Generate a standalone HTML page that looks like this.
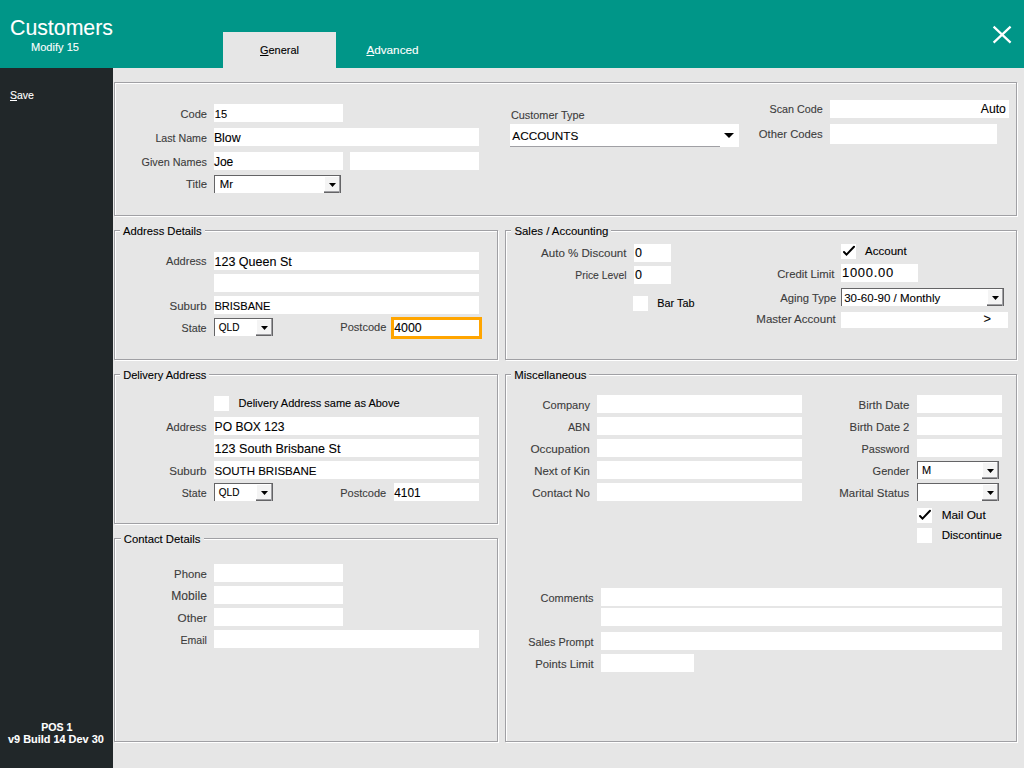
<!DOCTYPE html><html><head><meta charset="utf-8"><title>Customers</title><style>
html,body{margin:0;padding:0}
body{width:1024px;height:768px;overflow:hidden;position:relative;background:#e6e6e6;font-family:"Liberation Sans",sans-serif}
.t{position:absolute;white-space:nowrap;line-height:20px;-webkit-text-stroke:0.1px currentColor}
.r{position:absolute}
</style></head><body>
<div class="r" style="left:0px;top:0px;width:1024px;height:68px;background:#009688;"></div>
<div class="t" style="left:10.00px;top:18px;font-size:21.30px;color:#fff">Customers</div>
<div class="t" style="left:31.00px;top:37px;font-size:11.07px;color:#fff">Modify 15</div>
<div class="r" style="left:223px;top:32px;width:113px;height:36px;background:#e6e6e6;"></div>
<div class="t" style="left:260.00px;top:40px;font-size:10.96px;color:#000"><span style="text-decoration:underline;text-underline-offset:1px">G</span>eneral</div>
<div class="t" style="left:366.40px;top:40px;font-size:11.73px;color:#fff"><span style="text-decoration:underline;text-underline-offset:1px">A</span>dvanced</div>
<svg class="r" style="left:990px;top:23px" width="24" height="24"><path d="M3.6 3.6 L20.6 19.6 M20.6 3.6 L3.6 19.6" stroke="#fff" stroke-width="2.2"/></svg>
<div class="r" style="left:0px;top:68px;width:113px;height:700px;background:#212729;"></div>
<div class="t" style="left:10.00px;top:85px;font-size:10.53px;color:#fff"><span style="text-decoration:underline;text-underline-offset:1px">S</span>ave</div>
<div class="t" style="left:41.25px;top:717px;font-size:10.61px;color:#fff;font-weight:bold">POS 1</div>
<div class="t" style="left:8.00px;top:729px;font-size:10.91px;color:#fff;font-weight:bold">v9 Build 14 Dev 30</div>
<div class="r" style="left:115px;top:83px;width:903px;height:134px;border:1px solid #fff;box-sizing:border-box"></div>
<div class="r" style="left:114px;top:82px;width:903px;height:134px;border:1px solid #a0a0a4;box-sizing:border-box"></div>
<div class="r" style="left:115px;top:231px;width:384px;height:130px;border:1px solid #fff;box-sizing:border-box"></div>
<div class="r" style="left:114px;top:230px;width:384px;height:130px;border:1px solid #a0a0a4;box-sizing:border-box"></div>
<div class="r" style="left:120px;top:229px;width:85px;height:3px;background:#e6e6e6;"></div>
<div class="t" style="left:123.10px;top:221px;font-size:11.22px;color:#000">Address Details</div>
<div class="r" style="left:506px;top:231px;width:512px;height:130px;border:1px solid #fff;box-sizing:border-box"></div>
<div class="r" style="left:505px;top:230px;width:512px;height:130px;border:1px solid #a0a0a4;box-sizing:border-box"></div>
<div class="r" style="left:511px;top:229px;width:100px;height:3px;background:#e6e6e6;"></div>
<div class="t" style="left:514.40px;top:221px;font-size:11.43px;color:#000">Sales / Accounting</div>
<div class="r" style="left:115px;top:375px;width:384px;height:150px;border:1px solid #fff;box-sizing:border-box"></div>
<div class="r" style="left:114px;top:374px;width:384px;height:150px;border:1px solid #a0a0a4;box-sizing:border-box"></div>
<div class="r" style="left:120px;top:373px;width:89px;height:3px;background:#e6e6e6;"></div>
<div class="t" style="left:123.20px;top:365px;font-size:11.09px;color:#000">Delivery Address</div>
<div class="r" style="left:506px;top:375px;width:512px;height:368px;border:1px solid #fff;box-sizing:border-box"></div>
<div class="r" style="left:505px;top:374px;width:512px;height:368px;border:1px solid #a0a0a4;box-sizing:border-box"></div>
<div class="r" style="left:511px;top:373px;width:78px;height:3px;background:#e6e6e6;"></div>
<div class="t" style="left:514.30px;top:365px;font-size:11.40px;color:#000">Miscellaneous</div>
<div class="r" style="left:115px;top:539px;width:384px;height:204px;border:1px solid #fff;box-sizing:border-box"></div>
<div class="r" style="left:114px;top:538px;width:384px;height:204px;border:1px solid #a0a0a4;box-sizing:border-box"></div>
<div class="r" style="left:121px;top:537px;width:83px;height:3px;background:#e6e6e6;"></div>
<div class="t" style="left:123.80px;top:529px;font-size:11.31px;color:#000">Contact Details</div>
<div class="t" style="left:180.50px;top:104px;font-size:11.09px;color:#3c3c3c">Code</div>
<div class="t" style="left:155.40px;top:128px;font-size:10.67px;color:#3c3c3c">Last Name</div>
<div class="t" style="left:141.50px;top:152px;font-size:10.81px;color:#3c3c3c">Given Names</div>
<div class="t" style="left:186.00px;top:174px;font-size:11.35px;color:#3c3c3c">Title</div>
<div class="r" style="left:214px;top:104px;width:129px;height:18px;background:#fff;"></div>
<div class="t" style="left:214.80px;top:104px;font-size:11.08px;color:#000">15</div>
<div class="r" style="left:214px;top:128px;width:265px;height:18px;background:#fff;"></div>
<div class="t" style="left:213.90px;top:128px;font-size:12.35px;color:#000">Blow</div>
<div class="r" style="left:214px;top:152px;width:129px;height:18px;background:#fff;"></div>
<div class="t" style="left:213.90px;top:152px;font-size:12.05px;color:#000">Joe</div>
<div class="r" style="left:350px;top:152px;width:129px;height:18px;background:#fff;"></div>
<div class="r" style="left:214px;top:175px;width:127px;height:18px;background:#fff;"></div>
<div class="r" style="left:214px;top:175px;width:127px;height:1px;background:#646466;"></div>
<div class="r" style="left:214px;top:175px;width:1px;height:18px;background:#646466;"></div>
<div class="r" style="left:340px;top:175px;width:1px;height:18px;background:#646466;"></div>
<div class="r" style="left:324px;top:176px;width:16px;height:16px;background:#f4f4f4;"></div>
<div class="r" style="left:324px;top:176px;width:16px;height:1px;background:#fff;"></div>
<div class="r" style="left:324px;top:176px;width:1px;height:16px;background:#fff;"></div>
<div class="r" style="left:324px;top:192px;width:17px;height:1px;background:#646466;"></div>
<div class="r" style="left:339px;top:176px;width:1px;height:17px;background:#a0a0a4;"></div>
<div class="r" style="left:324px;top:191px;width:16px;height:1px;background:#a0a0a4;"></div>
<svg class="r" style="left:328.5px;top:183px" width="7" height="4"><polygon points="0,0 7,0 3.5,4" fill="#000"/></svg>
<div class="t" style="left:219.80px;top:174px;font-size:11.33px;color:#000">Mr</div>
<div class="t" style="left:510.90px;top:105px;font-size:10.90px;color:#3c3c3c">Customer Type</div>
<div class="r" style="left:510px;top:124px;width:229px;height:23px;background:#fff;"></div>
<div class="r" style="left:510px;top:146px;width:210px;height:1px;background:#a0a0a4;"></div>
<div class="t" style="left:512.30px;top:126px;font-size:11.78px;color:#000">ACCOUNTS</div>
<svg class="r" style="left:724px;top:133px" width="10" height="5"><polygon points="0,0 10,0 5,5" fill="#000"/></svg>
<div class="t" style="left:769.50px;top:99px;font-size:10.77px;color:#3c3c3c">Scan Code</div>
<div class="t" style="left:758.80px;top:124px;font-size:11.29px;color:#3c3c3c">Other Codes</div>
<div class="r" style="left:830px;top:100px;width:179px;height:18px;background:#fff;"></div>
<div class="t" style="left:980.80px;top:99px;font-size:12.17px;color:#000">Auto</div>
<div class="r" style="left:830px;top:124px;width:167px;height:20px;background:#fff;"></div>
<div class="t" style="left:166.10px;top:251px;font-size:11.04px;color:#3c3c3c">Address</div>
<div class="r" style="left:214px;top:252px;width:265px;height:18px;background:#fff;"></div>
<div class="t" style="left:214.50px;top:252px;font-size:12.53px;color:#000">123 Queen St</div>
<div class="r" style="left:214px;top:274px;width:265px;height:18px;background:#fff;"></div>
<div class="t" style="left:169.50px;top:296px;font-size:11.50px;color:#3c3c3c">Suburb</div>
<div class="r" style="left:214px;top:296px;width:265px;height:18px;background:#fff;"></div>
<div class="t" style="left:214.40px;top:296px;font-size:11.08px;color:#000">BRISBANE</div>
<div class="t" style="left:181.50px;top:318px;font-size:10.75px;color:#3c3c3c">State</div>
<div class="r" style="left:214px;top:318px;width:59px;height:18px;background:#fff;"></div>
<div class="r" style="left:214px;top:318px;width:59px;height:1px;background:#646466;"></div>
<div class="r" style="left:214px;top:318px;width:1px;height:18px;background:#646466;"></div>
<div class="r" style="left:272px;top:318px;width:1px;height:18px;background:#646466;"></div>
<div class="r" style="left:256px;top:319px;width:16px;height:16px;background:#f4f4f4;"></div>
<div class="r" style="left:256px;top:319px;width:16px;height:1px;background:#fff;"></div>
<div class="r" style="left:256px;top:319px;width:1px;height:16px;background:#fff;"></div>
<div class="r" style="left:256px;top:335px;width:17px;height:1px;background:#646466;"></div>
<div class="r" style="left:271px;top:319px;width:1px;height:17px;background:#a0a0a4;"></div>
<div class="r" style="left:256px;top:334px;width:16px;height:1px;background:#a0a0a4;"></div>
<svg class="r" style="left:260.5px;top:326px" width="7" height="4"><polygon points="0,0 7,0 3.5,4" fill="#000"/></svg>
<div class="t" style="left:218.80px;top:318px;font-size:10.02px;color:#000">QLD</div>
<div class="t" style="left:340.30px;top:317px;font-size:11.06px;color:#3c3c3c">Postcode</div>
<div class="r" style="left:391px;top:317px;width:91px;height:22px;background:#fff;border:3px solid #ffa500;box-sizing:border-box"></div>
<div class="t" style="left:394.20px;top:318px;font-size:12.36px;color:#000">4000</div>
<div class="t" style="left:541.10px;top:243px;font-size:11.55px;color:#3c3c3c">Auto % Discount</div>
<div class="r" style="left:634px;top:244px;width:37px;height:18px;background:#fff;"></div>
<div class="t" style="left:635.00px;top:243px;font-size:12.50px;color:#000">0</div>
<div class="t" style="left:575.30px;top:266px;font-size:10.35px;color:#3c3c3c">Price Level</div>
<div class="r" style="left:634px;top:266px;width:37px;height:18px;background:#fff;"></div>
<div class="t" style="left:635.00px;top:265px;font-size:12.50px;color:#000">0</div>
<div class="r" style="left:633px;top:296px;width:15px;height:15px;background:#fff;"></div>
<div class="t" style="left:657.30px;top:293px;font-size:10.85px;color:#000">Bar Tab</div>
<div class="r" style="left:841px;top:244px;width:15px;height:15px;background:#fff;"></div>
<svg class="r" style="left:841px;top:244px" width="15" height="15"><polyline points="3,8 5.5,10.6 13,2.8" fill="none" stroke="#000" stroke-width="2" stroke-linecap="round" stroke-linejoin="miter"/></svg>
<div class="t" style="left:865.10px;top:241px;font-size:11.51px;color:#000">Account</div>
<div class="t" style="left:777.20px;top:264px;font-size:11.34px;color:#3c3c3c">Credit Limit</div>
<div class="r" style="left:841px;top:264px;width:77px;height:18px;background:#fff;"></div>
<div class="t" style="left:842.00px;top:263px;font-size:13.00px;color:#000;letter-spacing:0.7px">1000.00</div>
<div class="t" style="left:780.20px;top:288px;font-size:11.27px;color:#3c3c3c">Aging Type</div>
<div class="r" style="left:841px;top:288px;width:163px;height:18px;background:#fff;"></div>
<div class="r" style="left:841px;top:288px;width:163px;height:1px;background:#646466;"></div>
<div class="r" style="left:841px;top:288px;width:1px;height:18px;background:#646466;"></div>
<div class="r" style="left:1003px;top:288px;width:1px;height:18px;background:#646466;"></div>
<div class="r" style="left:987px;top:289px;width:16px;height:16px;background:#f4f4f4;"></div>
<div class="r" style="left:987px;top:289px;width:16px;height:1px;background:#fff;"></div>
<div class="r" style="left:987px;top:289px;width:1px;height:16px;background:#fff;"></div>
<div class="r" style="left:987px;top:305px;width:17px;height:1px;background:#646466;"></div>
<div class="r" style="left:1002px;top:289px;width:1px;height:17px;background:#a0a0a4;"></div>
<div class="r" style="left:987px;top:304px;width:16px;height:1px;background:#a0a0a4;"></div>
<svg class="r" style="left:991.5px;top:296px" width="7" height="4"><polygon points="0,0 7,0 3.5,4" fill="#000"/></svg>
<div class="t" style="left:844.20px;top:288px;font-size:11.52px;color:#000">30-60-90 / Monthly</div>
<div class="t" style="left:756.30px;top:309px;font-size:11.54px;color:#3c3c3c">Master Account</div>
<div class="r" style="left:841px;top:312px;width:167px;height:16px;background:#fff;"></div>
<div class="t" style="left:983.50px;top:309px;font-size:12.82px;color:#000">&gt;</div>
<div class="r" style="left:214px;top:396px;width:15px;height:15px;background:#fff;"></div>
<div class="t" style="left:238.60px;top:393px;font-size:11.03px;color:#000">Delivery Address same as Above</div>
<div class="t" style="left:166.30px;top:417px;font-size:10.98px;color:#3c3c3c">Address</div>
<div class="r" style="left:214px;top:417px;width:265px;height:18px;background:#fff;"></div>
<div class="t" style="left:214.60px;top:417px;font-size:12.08px;color:#000">PO BOX 123</div>
<div class="r" style="left:214px;top:439px;width:265px;height:18px;background:#fff;"></div>
<div class="t" style="left:214.60px;top:439px;font-size:12.59px;color:#000">123 South Brisbane St</div>
<div class="t" style="left:169.20px;top:461px;font-size:11.60px;color:#3c3c3c">Suburb</div>
<div class="r" style="left:214px;top:461px;width:265px;height:18px;background:#fff;"></div>
<div class="t" style="left:214.60px;top:461px;font-size:11.54px;color:#000">SOUTH BRISBANE</div>
<div class="t" style="left:181.80px;top:483px;font-size:10.62px;color:#3c3c3c">State</div>
<div class="r" style="left:214px;top:483px;width:59px;height:18px;background:#fff;"></div>
<div class="r" style="left:214px;top:483px;width:59px;height:1px;background:#646466;"></div>
<div class="r" style="left:214px;top:483px;width:1px;height:18px;background:#646466;"></div>
<div class="r" style="left:272px;top:483px;width:1px;height:18px;background:#646466;"></div>
<div class="r" style="left:256px;top:484px;width:16px;height:16px;background:#f4f4f4;"></div>
<div class="r" style="left:256px;top:484px;width:16px;height:1px;background:#fff;"></div>
<div class="r" style="left:256px;top:484px;width:1px;height:16px;background:#fff;"></div>
<div class="r" style="left:256px;top:500px;width:17px;height:1px;background:#646466;"></div>
<div class="r" style="left:271px;top:484px;width:1px;height:17px;background:#a0a0a4;"></div>
<div class="r" style="left:256px;top:499px;width:16px;height:1px;background:#a0a0a4;"></div>
<svg class="r" style="left:260.5px;top:491px" width="7" height="4"><polygon points="0,0 7,0 3.5,4" fill="#000"/></svg>
<div class="t" style="left:218.80px;top:483px;font-size:10.02px;color:#000">QLD</div>
<div class="t" style="left:340.20px;top:483px;font-size:11.06px;color:#3c3c3c">Postcode</div>
<div class="r" style="left:394px;top:483px;width:85px;height:18px;background:#fff;"></div>
<div class="t" style="left:394.20px;top:483px;font-size:11.87px;color:#000">4101</div>
<div class="t" style="left:542.50px;top:395px;font-size:11.10px;color:#3c3c3c">Company</div>
<div class="r" style="left:597px;top:395px;width:205px;height:18px;background:#fff;"></div>
<div class="t" style="left:567.90px;top:417px;font-size:10.75px;color:#3c3c3c">ABN</div>
<div class="r" style="left:597px;top:417px;width:205px;height:18px;background:#fff;"></div>
<div class="t" style="left:530.40px;top:439px;font-size:11.78px;color:#3c3c3c">Occupation</div>
<div class="r" style="left:597px;top:439px;width:205px;height:18px;background:#fff;"></div>
<div class="t" style="left:534.30px;top:461px;font-size:11.39px;color:#3c3c3c">Next of Kin</div>
<div class="r" style="left:597px;top:461px;width:205px;height:18px;background:#fff;"></div>
<div class="t" style="left:532.30px;top:483px;font-size:11.53px;color:#3c3c3c">Contact No</div>
<div class="r" style="left:597px;top:483px;width:205px;height:18px;background:#fff;"></div>
<div class="t" style="left:858.50px;top:395px;font-size:11.45px;color:#3c3c3c">Birth Date</div>
<div class="r" style="left:917px;top:395px;width:85px;height:18px;background:#fff;"></div>
<div class="t" style="left:849.60px;top:417px;font-size:11.33px;color:#3c3c3c">Birth Date 2</div>
<div class="r" style="left:917px;top:417px;width:85px;height:18px;background:#fff;"></div>
<div class="t" style="left:861.60px;top:439px;font-size:10.89px;color:#3c3c3c">Password</div>
<div class="r" style="left:917px;top:439px;width:85px;height:18px;background:#fff;"></div>
<div class="t" style="left:872.60px;top:461px;font-size:11.03px;color:#3c3c3c">Gender</div>
<div class="t" style="left:839.30px;top:483px;font-size:11.46px;color:#3c3c3c">Marital Status</div>
<div class="r" style="left:917px;top:461px;width:82px;height:18px;background:#fff;"></div>
<div class="r" style="left:917px;top:461px;width:82px;height:1px;background:#646466;"></div>
<div class="r" style="left:917px;top:461px;width:1px;height:18px;background:#646466;"></div>
<div class="r" style="left:998px;top:461px;width:1px;height:18px;background:#646466;"></div>
<div class="r" style="left:982px;top:462px;width:16px;height:16px;background:#f4f4f4;"></div>
<div class="r" style="left:982px;top:462px;width:16px;height:1px;background:#fff;"></div>
<div class="r" style="left:982px;top:462px;width:1px;height:16px;background:#fff;"></div>
<div class="r" style="left:982px;top:478px;width:17px;height:1px;background:#646466;"></div>
<div class="r" style="left:997px;top:462px;width:1px;height:17px;background:#a0a0a4;"></div>
<div class="r" style="left:982px;top:477px;width:16px;height:1px;background:#a0a0a4;"></div>
<svg class="r" style="left:986.5px;top:469px" width="7" height="4"><polygon points="0,0 7,0 3.5,4" fill="#000"/></svg>
<div class="t" style="left:922.00px;top:460px;font-size:11.00px;color:#000">M</div>
<div class="r" style="left:917px;top:483px;width:82px;height:18px;background:#fff;"></div>
<div class="r" style="left:917px;top:483px;width:82px;height:1px;background:#646466;"></div>
<div class="r" style="left:917px;top:483px;width:1px;height:18px;background:#646466;"></div>
<div class="r" style="left:998px;top:483px;width:1px;height:18px;background:#646466;"></div>
<div class="r" style="left:982px;top:484px;width:16px;height:16px;background:#f4f4f4;"></div>
<div class="r" style="left:982px;top:484px;width:16px;height:1px;background:#fff;"></div>
<div class="r" style="left:982px;top:484px;width:1px;height:16px;background:#fff;"></div>
<div class="r" style="left:982px;top:500px;width:17px;height:1px;background:#646466;"></div>
<div class="r" style="left:997px;top:484px;width:1px;height:17px;background:#a0a0a4;"></div>
<div class="r" style="left:982px;top:499px;width:16px;height:1px;background:#a0a0a4;"></div>
<svg class="r" style="left:986.5px;top:491px" width="7" height="4"><polygon points="0,0 7,0 3.5,4" fill="#000"/></svg>
<div class="r" style="left:917px;top:508px;width:15px;height:15px;background:#fff;"></div>
<svg class="r" style="left:917px;top:508px" width="15" height="15"><polyline points="3,8 5.5,10.6 13,2.8" fill="none" stroke="#000" stroke-width="2" stroke-linecap="round" stroke-linejoin="miter"/></svg>
<div class="t" style="left:941.70px;top:505px;font-size:11.84px;color:#000">Mail Out</div>
<div class="r" style="left:917px;top:528px;width:15px;height:15px;background:#fff;"></div>
<div class="t" style="left:941.70px;top:525px;font-size:11.54px;color:#000">Discontinue</div>
<div class="t" style="left:540.50px;top:588px;font-size:10.98px;color:#3c3c3c">Comments</div>
<div class="r" style="left:601px;top:588px;width:401px;height:18px;background:#fff;"></div>
<div class="r" style="left:601px;top:608px;width:401px;height:18px;background:#fff;"></div>
<div class="t" style="left:528.20px;top:632px;font-size:10.89px;color:#3c3c3c">Sales Prompt</div>
<div class="r" style="left:601px;top:632px;width:401px;height:18px;background:#fff;"></div>
<div class="t" style="left:535.20px;top:654px;font-size:11.30px;color:#3c3c3c">Points Limit</div>
<div class="r" style="left:601px;top:654px;width:93px;height:18px;background:#fff;"></div>
<div class="t" style="left:174.10px;top:564px;font-size:11.35px;color:#3c3c3c">Phone</div>
<div class="r" style="left:214px;top:564px;width:129px;height:18px;background:#fff;"></div>
<div class="t" style="left:171.30px;top:586px;font-size:12.09px;color:#3c3c3c">Mobile</div>
<div class="r" style="left:214px;top:586px;width:129px;height:18px;background:#fff;"></div>
<div class="t" style="left:177.60px;top:608px;font-size:11.72px;color:#3c3c3c">Other</div>
<div class="r" style="left:214px;top:608px;width:129px;height:18px;background:#fff;"></div>
<div class="t" style="left:180.50px;top:630px;font-size:10.56px;color:#3c3c3c">Email</div>
<div class="r" style="left:214px;top:630px;width:265px;height:18px;background:#fff;"></div>
</body></html>
